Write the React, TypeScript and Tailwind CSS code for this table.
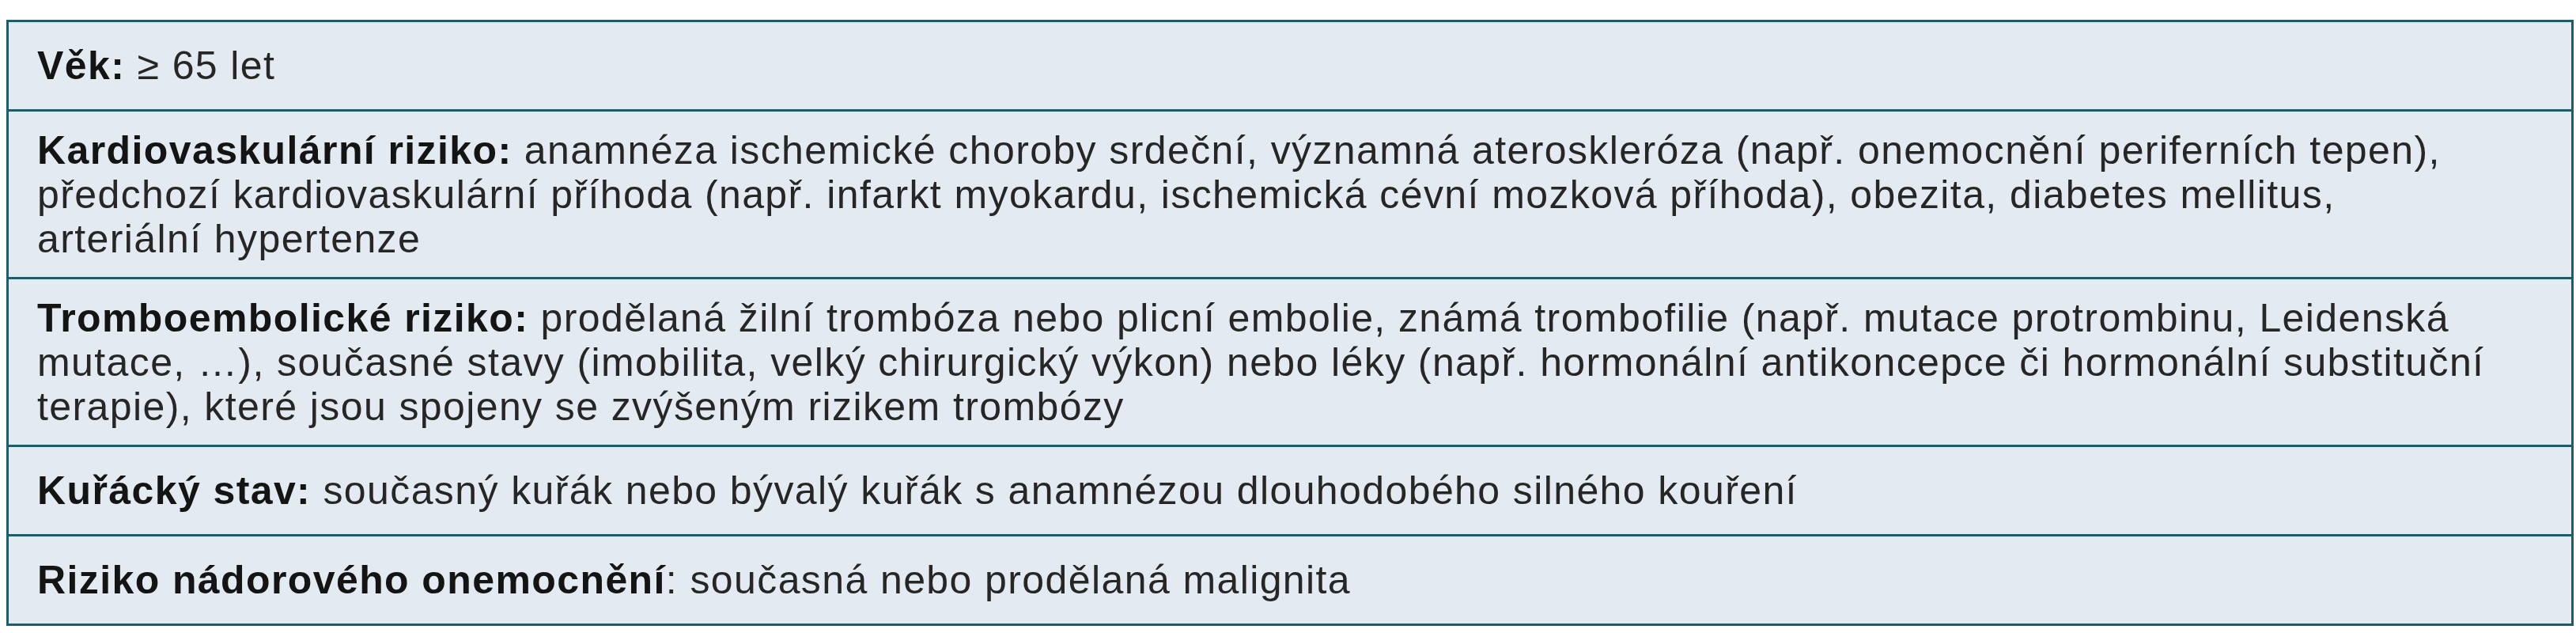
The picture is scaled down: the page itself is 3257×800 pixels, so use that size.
const rows: { label: string; lines: string[] }[] = [
  { label: 'Věk:', lines: [' ≥ 65 let'] },
  {
    label: 'Kardiovaskulární riziko:',
    lines: [
      ' anamnéza ischemické choroby srdeční, významná ateroskleróza (např. onemocnění periferních tepen),',
      'předchozí kardiovaskulární příhoda (např. infarkt myokardu, ischemická cévní mozková příhoda), obezita, diabetes mellitus,',
      'arteriální hypertenze',
    ],
  },
  {
    label: 'Tromboembolické riziko:',
    lines: [
      ' prodělaná žilní trombóza nebo plicní embolie, známá trombofilie (např. mutace protrombinu, Leidenská',
      'mutace, …), současné stavy (imobilita, velký chirurgický výkon) nebo léky (např. hormonální antikoncepce či hormonální substituční',
      'terapie), které jsou spojeny se zvýšeným rizikem trombózy',
    ],
  },
  {
    label: 'Kuřácký stav:',
    lines: [' současný kuřák nebo bývalý kuřák s anamnézou dlouhodobého silného kouření'],
  },
  {
    label: 'Riziko nádorového onemocnění',
    lines: [': současná nebo prodělaná malignita'],
  },
]

export default function App() {
  return (
    <div className="min-h-[800px] bg-white pt-[25px] pl-[8px] font-['Liberation_Sans',Arial,sans-serif]">
      <div className="w-[3246px] border-[3px] border-[#235a6a] bg-[#e3eaf2]">
        {rows.map((row, i) => (
          <div
            key={row.label}
            className={
              (i > 0 ? 'border-t-[3px] border-[#235a6a] ' : '') +
              (row.lines.length > 1 ? 'py-[20.5px] ' : 'py-[27px] ') +
              'px-[36px] text-[50px] leading-[56px] tracking-[1.4px] text-[#262626] shadow-[inset_0_2px_0_#cdf2f8]'
            }
          >
            {row.lines.map((line, j) => (
              <div key={j} className="whitespace-pre">
                {j === 0 && <span className="font-bold text-[#141414]">{row.label}</span>}
                {line}
              </div>
            ))}
          </div>
        ))}
      </div>
    </div>
  )
}
